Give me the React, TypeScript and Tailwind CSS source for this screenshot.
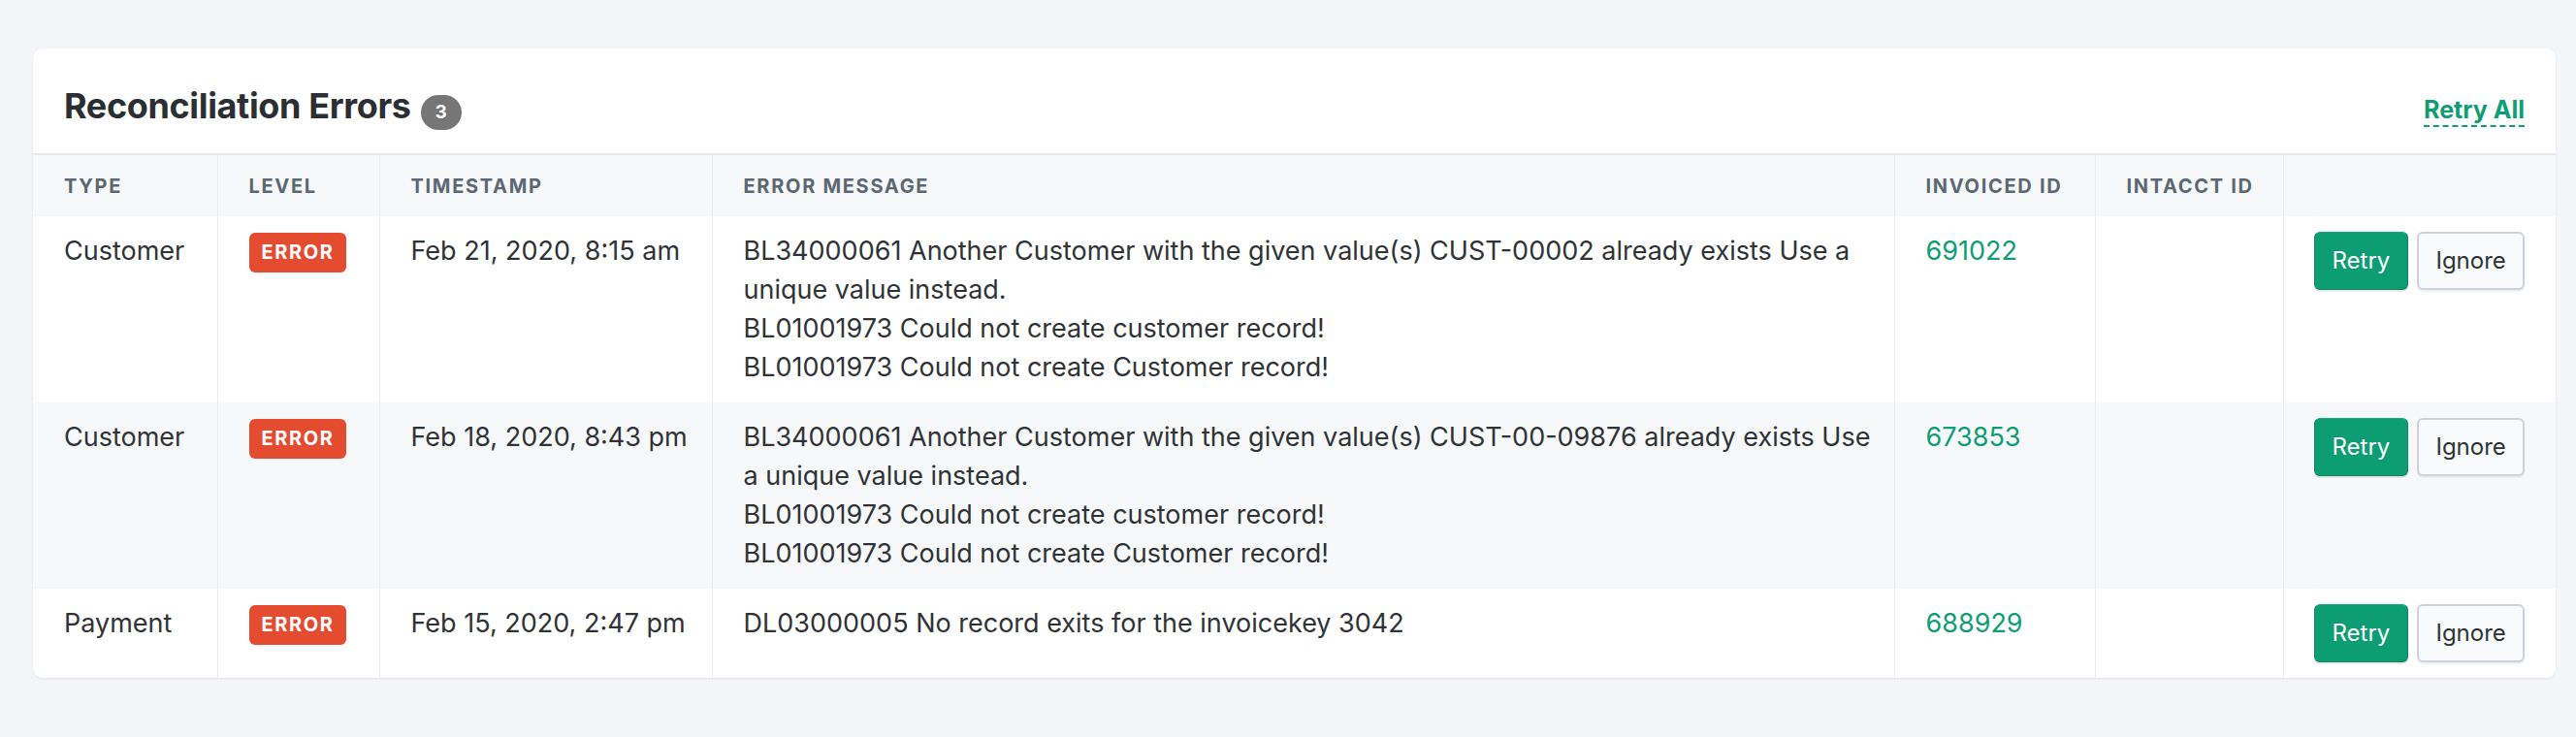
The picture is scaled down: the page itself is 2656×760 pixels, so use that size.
import React from 'react'

type Row = {
    type: string
    timestamp: string
    messages: string[]
    invoicedId: string
    intacctId: string
}

const rows: Row[] = [
    {
        type: 'Customer',
        timestamp: 'Feb 21, 2020, 8:15 am',
        messages: [
            'BL34000061 Another Customer with the given value(s) CUST-00002 already exists Use a unique value instead.',
            'BL01001973 Could not create customer record!',
            'BL01001973 Could not create Customer record!',
        ],
        invoicedId: '691022',
        intacctId: '',
    },
    {
        type: 'Customer',
        timestamp: 'Feb 18, 2020, 8:43 pm',
        messages: [
            'BL34000061 Another Customer with the given value(s) CUST-00-09876 already exists Use a unique value instead.',
            'BL01001973 Could not create customer record!',
            'BL01001973 Could not create Customer record!',
        ],
        invoicedId: '673853',
        intacctId: '',
    },
    {
        type: 'Payment',
        timestamp: 'Feb 15, 2020, 2:47 pm',
        messages: ['DL03000005 No record exits for the invoicekey 3042'],
        invoicedId: '688929',
        intacctId: '',
    },
]

const headers = ['Type', 'Level', 'Timestamp', 'Error Message', 'Invoiced ID', 'Intacct ID', '']

const App = () => {
    return (
        <div className="min-h-screen bg-[#f4f5f8] pt-[50px] pl-[34px] font-['Inter',sans-serif] text-[#2f3337]">
            <div className="w-[2601px] bg-white rounded-[10px] shadow-[0_1px_3px_rgba(0,0,0,0.08)] overflow-hidden">
                {/* card header */}
                <div className="flex items-baseline justify-between h-[110px] pt-[38px] px-[32px] border-b-2 border-[#e7e9ec]">
                    <h2 className="text-[36px] leading-[42px] font-bold tracking-[-0.01em] text-[#2b2f33]">
                        Reconciliation Errors
                        <span className="inline-block ml-[10px] w-[42px] h-[36px] leading-[36px] rounded-full bg-[#767676] text-white text-[19px] font-bold text-center tracking-normal">
                            3
                        </span>
                    </h2>
                    <a
                        href="#"
                        className="text-[25px] leading-[32px] font-bold text-[#0e9d74] border-b-2 border-dashed border-[#0e9d74]"
                    >
                        Retry All
                    </a>
                </div>

                <table className="table-fixed border-collapse w-full">
                    <colgroup>
                        <col className="w-[190px]" />
                        <col className="w-[167px]" />
                        <col className="w-[343px]" />
                        <col className="w-[1219px]" />
                        <col className="w-[207px]" />
                        <col className="w-[194px]" />
                        <col className="w-[281px]" />
                    </colgroup>
                    <thead>
                        <tr className="bg-[#f7f8fa] h-[63px]">
                            {headers.map((h, i) => (
                                <th
                                    key={i}
                                    className={
                                        'text-left align-middle px-[32px] text-[20px] font-bold uppercase tracking-[0.085em] text-[#5b6874] whitespace-nowrap ' +
                                        (i > 0 ? 'border-l border-[#eaecef]' : '')
                                    }
                                >
                                    {h}
                                </th>
                            ))}
                        </tr>
                    </thead>
                    <tbody className="text-[27px] leading-[40px]">
                        {rows.map((r, idx) => (
                            <tr key={idx} className={idx % 2 === 1 ? 'bg-[#f7f8fa]' : 'bg-white'}>
                                <td className="align-top py-4 px-[32px]">{r.type}</td>
                                <td className="align-top py-4 px-[32px] border-l border-[#eaecef]">
                                    <span className="block w-fit mt-[1px] h-[41px] leading-[41px] px-[13px] rounded-[6px] bg-[#e54b2f] text-white text-[20px] font-bold tracking-[0.08em]">
                                        ERROR
                                    </span>
                                </td>
                                <td className="align-top py-4 pl-[32px] pr-[8px] whitespace-nowrap border-l border-[#eaecef]">
                                    {r.timestamp}
                                </td>
                                <td className="align-top py-4 pl-[32px] pr-[20px] border-l border-[#eaecef]">
                                    {r.messages.map((m, i) => (
                                        <div key={i}>{m}</div>
                                    ))}
                                </td>
                                <td className="align-top py-4 px-[32px] border-l border-[#eaecef]">
                                    <a href="#" className="text-[#0e9d74]">
                                        {r.invoicedId}
                                    </a>
                                </td>
                                <td className="align-top py-4 px-[32px] border-l border-[#eaecef]">{r.intacctId}</td>
                                <td className="align-top py-4 pl-[31px] pr-[32px] border-l border-[#eaecef]">
                                    <div className="flex justify-end gap-[9px]">
                                        <button className="h-[60px] w-[98px] rounded-[6px] bg-[#0c9e72] border border-[#0a8763] border-t-[#19a97e] text-white text-[24px] shadow-[0_2px_0_rgba(0,0,0,0.08)]">
                                            Retry
                                        </button>
                                        <button className="h-[60px] w-[111px] rounded-[6px] bg-[#f9fafb] border-2 border-[#cbd2db] text-[#2f3337] text-[24px] shadow-[0_2px_0_rgba(0,0,0,0.05)]">
                                            Ignore
                                        </button>
                                    </div>
                                </td>
                            </tr>
                        ))}
                    </tbody>
                </table>
            </div>
        </div>
    )
}

export default App
